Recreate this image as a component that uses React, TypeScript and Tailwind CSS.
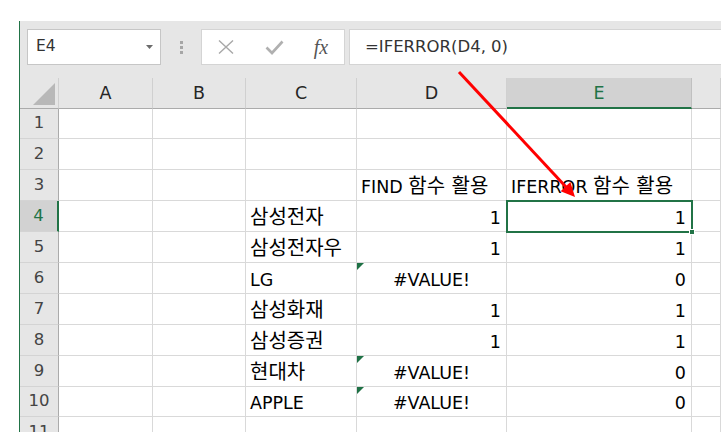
const COLS = ["A", "B", "C", "D", "E", ""];

type Align = "l" | "r" | "c";
type Cell = { t: string; a?: Align; err?: boolean };

const DATA: Record<number, [Cell, Cell, Cell]> = {
  3: [{ t: "" }, { t: "FIND 함수 활용" }, { t: "IFERROR 함수 활용" }],
  4: [{ t: "삼성전자" }, { t: "1", a: "r" }, { t: "1", a: "r" }],
  5: [{ t: "삼성전자우" }, { t: "1", a: "r" }, { t: "1", a: "r" }],
  6: [{ t: "LG" }, { t: "#VALUE!", a: "c", err: true }, { t: "0", a: "r" }],
  7: [{ t: "삼성화재" }, { t: "1", a: "r" }, { t: "1", a: "r" }],
  8: [{ t: "삼성증권" }, { t: "1", a: "r" }, { t: "1", a: "r" }],
  9: [{ t: "현대차" }, { t: "#VALUE!", a: "c", err: true }, { t: "0", a: "r" }],
  10: [{ t: "APPLE" }, { t: "#VALUE!", a: "c", err: true }, { t: "0", a: "r" }],
};

const ROW_H: Record<number, string> = {
  1: "h-[30px]",
  2: "h-[31px]",
  3: "h-[31px]",
  4: "h-[31px]",
  5: "h-[31px]",
  6: "h-[31px]",
  7: "h-[31px]",
  8: "h-[31px]",
  9: "h-[31px]",
  10: "h-[30px]",
  11: "h-[31px]",
};

const GRID = "grid grid-cols-[39px_94px_93px_111px_150px_185px_1fr]";

// hangul in the screenshot renders larger than the latin letters around it
function Rich({ t }: { t: string }) {
  const parts = t.split(/([\uac00-\ud7a3]+(?:\s+[\uac00-\ud7a3]+)*)/);
  return (
    <>
      {parts.map((p, i) =>
        /[\uac00-\ud7a3]/.test(p) ? (
          <span key={i} className="text-[20px]">
            {p}
          </span>
        ) : (
          p
        )
      )}
    </>
  );
}

function DataCell({ cell, selected }: { cell?: Cell; selected?: boolean }) {
  const a = cell?.a ?? "l";
  return (
    <div
      className={
        "relative flex items-end border-r border-b border-[#d9d9d9] pb-[2px] leading-[22px] text-[17.5px] text-black whitespace-nowrap " +
        (a === "r" ? "justify-end pr-[5px]" : a === "c" ? "justify-center" : "justify-start pl-[4px]")
      }
    >
      {cell?.err && (
        <div className="absolute left-0 top-0 h-0 w-0 border-t-[7px] border-r-[7px] border-t-[#1e7145] border-r-transparent" />
      )}
      <span>{cell && <Rich t={cell.t} />}</span>
      {selected && (
        <>
          <div className="absolute -left-[1px] -top-[1px] -right-[2px] -bottom-[2px] z-10 border-2 border-[#217346]" />
          <div className="absolute -right-[4px] -bottom-[4px] z-20 h-[6px] w-[6px] border border-white bg-[#217346]" />
        </>
      )}
    </div>
  );
}

function SheetRow({ n }: { n: number }) {
  const d = DATA[n];
  const sel = n === 4;
  return (
    <div className={GRID + " " + ROW_H[n]}>
      <div
        className={
          "flex items-center justify-center border-b border-b-[#d4d4d4] text-[16.5px] " +
          (sel
            ? "bg-[#d2d2d2] border-r-2 border-r-[#217346] text-[#217346]"
            : "bg-[#e6e6e6] border-r border-r-[#ababab] text-[#444]")
        }
      >
        {n}
      </div>
      <DataCell />
      <DataCell />
      <DataCell cell={d?.[0]} />
      <DataCell cell={d?.[1]} />
      <DataCell cell={d?.[2]} selected={sel} />
      <DataCell />
    </div>
  );
}

export default function App() {
  return (
    <div className="relative h-[448px] w-[721px] overflow-hidden bg-white font-['DejaVu_Sans','Noto_Sans_CJK_KR',sans-serif]">
      <div className="h-[21px]" />
      <div className="ml-[19px] flex h-[411px] flex-col overflow-hidden border-l border-[#217346] bg-[#e6e6e6]">
        {/* formula bar */}
        <div className="flex h-[57px] shrink-0 items-start pl-[7px] pt-[8px]">
          <div className="flex h-[36px] w-[134px] items-center justify-between border border-[#c6c6c6] bg-white pl-[8px] pr-[7px]">
            <span className="text-[15.5px] text-[#333]">E4</span>
            <svg width="7" height="4" viewBox="0 0 7 4">
              <path d="M0 0h7L3.5 4z" fill="#6b6b6b" />
            </svg>
          </div>
          <div className="flex h-[36px] w-[40px] flex-col items-center justify-center gap-[2px]">
            <span className="h-[3px] w-[3px] bg-[#a6a6a6]" />
            <span className="h-[3px] w-[3px] bg-[#a6a6a6]" />
            <span className="h-[3px] w-[3px] bg-[#a6a6a6]" />
          </div>
          <div className="flex h-[36px] w-[144px] items-center border border-[#d4d4d4] bg-white">
            <div className="flex w-[48px] justify-center">
              <svg width="16" height="14" viewBox="0 0 16 14">
                <path d="M1 0.5L15 13.5M15 0.5L1 13.5" stroke="#a8a8a8" strokeWidth="1.4" />
              </svg>
            </div>
            <div className="flex w-[48px] justify-center">
              <svg width="19" height="15" viewBox="0 0 19 15">
                <path d="M1.5 7.5L7 13L17.5 1.5" stroke="#b0b0b0" strokeWidth="2.6" fill="none" />
              </svg>
            </div>
            <div className="flex w-[46px] justify-center font-['Liberation_Serif',serif] text-[20px] italic text-[#555]">
              fx
            </div>
          </div>
          <div className="ml-[4px] -mr-[2px] flex h-[36px] flex-1 items-center border border-[#d4d4d4] bg-white pl-[15px] text-[16.5px] text-[#333]">
            =IFERROR(D4, 0)
          </div>
        </div>

        {/* column headers */}
        <div className={GRID + " h-[31px] shrink-0"}>
          <div className="relative border-r border-b border-r-[#d0d0d0] border-b-[#ababab]">
            <svg className="absolute left-[13px] top-[5px]" width="22" height="22" viewBox="0 0 22 22">
              <path d="M22 0V22H0z" fill="#b8b8b8" />
            </svg>
          </div>
          {COLS.map((c, i) =>
            c === "E" ? (
              <div
                key={i}
                className="flex items-center justify-center border-r border-b-2 border-r-[#c0c0c0] border-b-[#217346] bg-[#d2d2d2] pt-[1px] text-[17.5px] text-[#217346]"
              >
                {c}
              </div>
            ) : (
              <div
                key={i}
                className="flex items-center justify-center border-r border-b border-r-[#d0d0d0] border-b-[#ababab] text-[17.5px] text-[#262626]"
              >
                {c}
              </div>
            )
          )}
        </div>

        {/* rows */}
        <div className="bg-white">
          {[1, 2, 3, 4, 5, 6, 7, 8, 9, 10, 11].map((n) => (
            <SheetRow key={n} n={n} />
          ))}
        </div>
      </div>

      {/* red annotation arrow */}
      <svg className="pointer-events-none absolute inset-0" width="721" height="448" viewBox="0 0 721 448">
        <line x1="459" y1="72" x2="566" y2="187" stroke="#ff0000" strokeWidth="3" />
        <polygon points="575,197 560.6,191.3 570.4,182.1" fill="#ff0000" />
      </svg>
    </div>
  );
}
